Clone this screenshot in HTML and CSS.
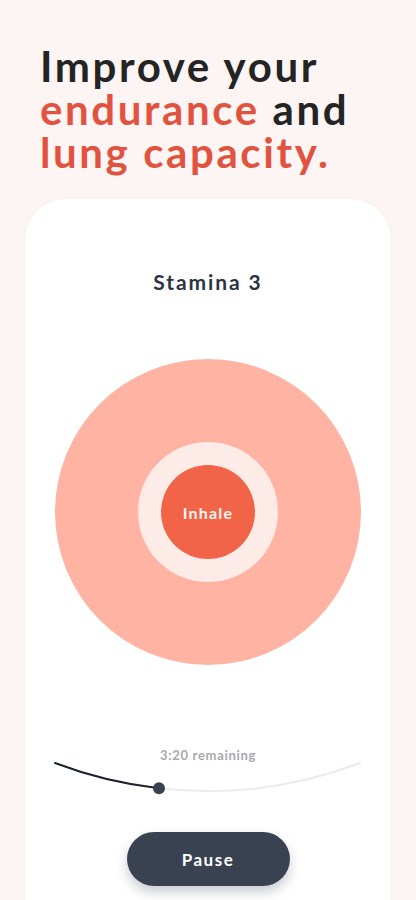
FILE: index.html
```html
<!DOCTYPE html>
<html lang="en">
<head>
<meta charset="utf-8">
<title>Stamina</title>
<link rel="stylesheet" href="styles.css">
</head>
<body>
<main class="page">
  <h1 class="headline">
    <span class="dark">Improve your</span><br>
    <span class="accent">endurance</span> <span class="dark">and</span><br>
    <span class="accent">lung capacity.</span>
  </h1>
  <section class="card">
    <h2 class="title">Stamina 3</h2>
    <div class="breath">
      <div class="ring">
        <div class="core">Inhale</div>
      </div>
    </div>
    <div class="remaining">3:20 remaining</div>
    <svg class="progress" viewBox="0 0 366 40" width="366" height="40" aria-hidden="true">
      <path d="M134 29.25 A429 429 0 0 0 335 4" fill="none" stroke="#ebebeb" stroke-width="2" stroke-linecap="round"/>
      <path d="M30 4 A429 429 0 0 0 134 29.25" fill="none" stroke="#1e2330" stroke-width="2" stroke-linecap="round"/>
      <circle cx="134" cy="29.25" r="6" fill="#3a4150"/>
    </svg>
    <button class="pause">Pause</button>
  </section>
</main>
</body>
</html>
```
FILE: styles.css
```css
html, body {
  margin: 0;
  padding: 0;
}
body {
  background: #fdf5f3;
  font-family: "Lato", "Liberation Sans", sans-serif;
  width: 416px;
  height: 900px;
  overflow: hidden;
}
.page {
  display: flex;
  flex-direction: column;
}
.headline {
  margin: 45px 0 0 40px;
  font-size: 42px;
  line-height: 43px;
  font-weight: 700;
  letter-spacing: 2.6px;
}
.dark { color: #242424; }
.accent { color: #e1533f; }
.card {
  margin: 25px 25px 0;
  background: #ffffff;
  border-radius: 40px 40px 0 0;
  height: 720px;
  display: flex;
  flex-direction: column;
  align-items: center;
  box-shadow: 0 0 2px rgba(230, 200, 190, 0.35);
}
.title {
  margin: 71px 0 0;
  font-size: 21px;
  line-height: 24px;
  font-weight: 700;
  color: #2d3342;
  letter-spacing: 1.9px;
}
.breath {
  margin-top: 65px;
  width: 306px;
  height: 306px;
  border-radius: 50%;
  background: #ffb3a2;
  display: flex;
  align-items: center;
  justify-content: center;
}
.ring {
  width: 140px;
  height: 140px;
  border-radius: 50%;
  background: #fdebe7;
  display: flex;
  align-items: center;
  justify-content: center;
}
.core {
  width: 94px;
  height: 94px;
  border-radius: 50%;
  background: #f26447;
  color: #fff5f2;
  font-size: 16px;
  font-weight: 700;
  display: flex;
  align-items: center;
  justify-content: center;
  letter-spacing: 1.2px;
}
.remaining {
  margin-top: 82px;
  font-size: 13px;
  line-height: 16px;
  font-weight: 700;
  color: #a9a9ad;
  letter-spacing: 0.7px;
}
.progress {
  display: block;
  margin-top: -4px;
}
.pause {
  margin-top: 33px;
  width: 163px;
  height: 54px;
  border: none;
  border-radius: 27px;
  background: #3a4252;
  color: #ffffff;
  font-family: "Lato", "Liberation Sans", sans-serif;
  font-size: 17px;
  font-weight: 700;
  letter-spacing: 1.5px;
  box-shadow: 0 6px 12px rgba(40, 50, 70, 0.25);
}
```
